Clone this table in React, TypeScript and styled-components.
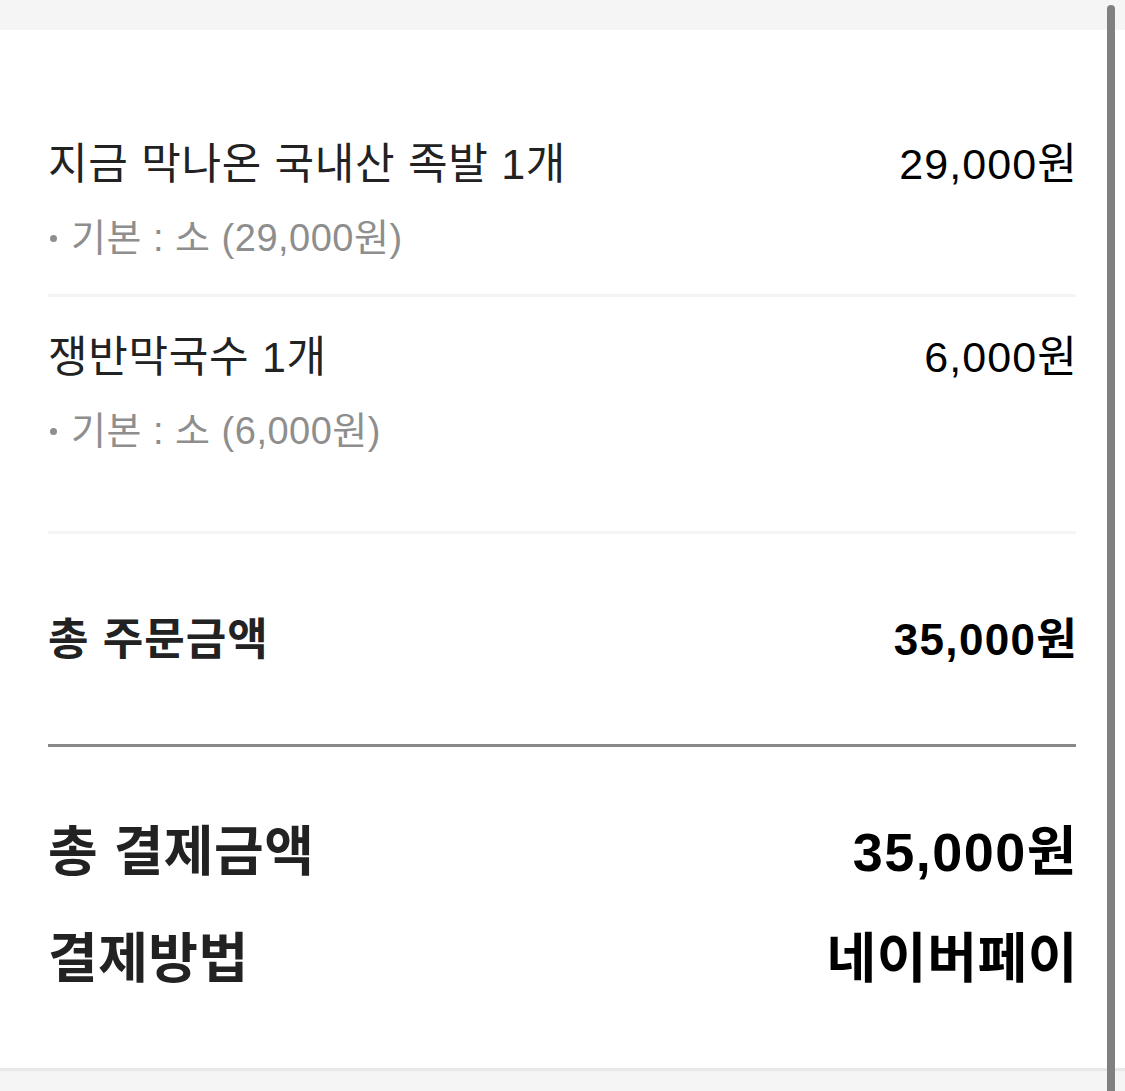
import React from "react";
import styled, { createGlobalStyle } from "styled-components";

const Global = createGlobalStyle`
  html, body { margin: 0; padding: 0; background: #ffffff; }
  body { font-family: "Liberation Sans", "Noto Sans CJK KR", sans-serif; -webkit-font-smoothing: antialiased; }
  * { box-sizing: border-box; }
`;

const Page = styled.div`
  position: relative;
  width: 1125px;
  height: 1091px;
  overflow: hidden;
  display: flex;
  flex-direction: column;
  background: #ffffff;
`;

const TopBand = styled.div`
  height: 30px;
  flex: none;
  background: #f5f5f5;
`;

const Card = styled.main`
  flex: none;
  padding: 0 49px 0 48px;
  background: #ffffff;
`;

const ItemSection = styled.section`
  padding: 74px 0 44px;
  border-bottom: 3px solid #f4f4f4;
`;

const Item = styled.div`
  padding: 32px 0 31px;
  & + & {
    border-top: 3px solid #f4f4f4;
  }
`;

const Row = styled.div<{ $lh: number }>`
  display: flex;
  justify-content: space-between;
  align-items: center;
  line-height: ${(p) => p.$lh}px;
  height: ${(p) => p.$lh}px;
`;

const ItemName = styled.span`
  font-size: 43px;
  font-weight: 400;
  color: #222222;
  letter-spacing: 0.7px;
`;

const ItemPrice = styled.span`
  font-size: 43px;
  font-weight: 400;
  color: #000000;
  letter-spacing: 1.1px;
  margin-right: -2px;
`;

const OptionLine = styled.div`
  margin-top: 21px;
  height: 50px;
  line-height: 50px;
  font-size: 38px;
  color: #8e8e8e;
  display: flex;
  align-items: center;
  gap: 10px;
  letter-spacing: 0.5px;
`;

const Dot = styled.span`
  width: 7px;
  height: 7px;
  border-radius: 50%;
  background: #8e8e8e;
  flex: none;
  margin: 0 4px 0 2px;
`;

const OrderSection = styled.section`
  padding: 78px 0 76px;
  border-bottom: 3px solid #888888;
`;

const OrderLabel = styled.span`
  font-size: 44px;
  font-weight: 700;
  color: #222222;
  letter-spacing: 1px;
`;

const OrderValue = styled.span`
  font-size: 44px;
  font-weight: 700;
  color: #000000;
  letter-spacing: 1.3px;
  margin-right: -2px;
`;

const PaySection = styled.section`
  padding: 73px 0 77px;
  display: flex;
  flex-direction: column;
  gap: 43px;
`;

const PayLabel = styled.span`
  font-size: 54px;
  font-weight: 700;
  color: #222222;
  letter-spacing: 0.5px;
`;

const PayValue = styled.span<{ $digits?: boolean }>`
  font-size: 54px;
  font-weight: 700;
  color: #000000;
  letter-spacing: ${(p) => (p.$digits ? "1.5px" : "0.6px")};
  margin-right: -2px;
`;

const BottomBand = styled.div`
  flex: 1;
  background: #f5f5f5;
  border-top: 3px solid #e8e8e8;
`;

const ScrollThumb = styled.div`
  position: absolute;
  top: 5px;
  bottom: 0;
  left: 1107px;
  width: 8px;
  border-radius: 4px 4px 0 0;
  background: #808080;
`;

type Line = { name: string; price: string; option: string };

const items: Line[] = [
  { name: "지금 막나온 국내산 족발 1개", price: "29,000원", option: "기본 : 소 (29,000원)" },
  { name: "쟁반막국수 1개", price: "6,000원", option: "기본 : 소 (6,000원)" },
];

export default function App() {
  return (
    <>
      <Global />
      <Page>
        <TopBand />
        <Card>
          <ItemSection>
            {items.map((it) => (
              <Item key={it.name}>
                <Row $lh={56}>
                  <ItemName>{it.name}</ItemName>
                  <ItemPrice>{it.price}</ItemPrice>
                </Row>
                <OptionLine>
                  <Dot />
                  <span>{it.option}</span>
                </OptionLine>
              </Item>
            ))}
          </ItemSection>
          <OrderSection>
            <Row $lh={56}>
              <OrderLabel>총 주문금액</OrderLabel>
              <OrderValue>35,000원</OrderValue>
            </Row>
          </OrderSection>
          <PaySection>
            <Row $lh={64}>
              <PayLabel>총 결제금액</PayLabel>
              <PayValue $digits>35,000원</PayValue>
            </Row>
            <Row $lh={64}>
              <PayLabel>결제방법</PayLabel>
              <PayValue>네이버페이</PayValue>
            </Row>
          </PaySection>
        </Card>
        <BottomBand />
        <ScrollThumb />
      </Page>
    </>
  );
}
